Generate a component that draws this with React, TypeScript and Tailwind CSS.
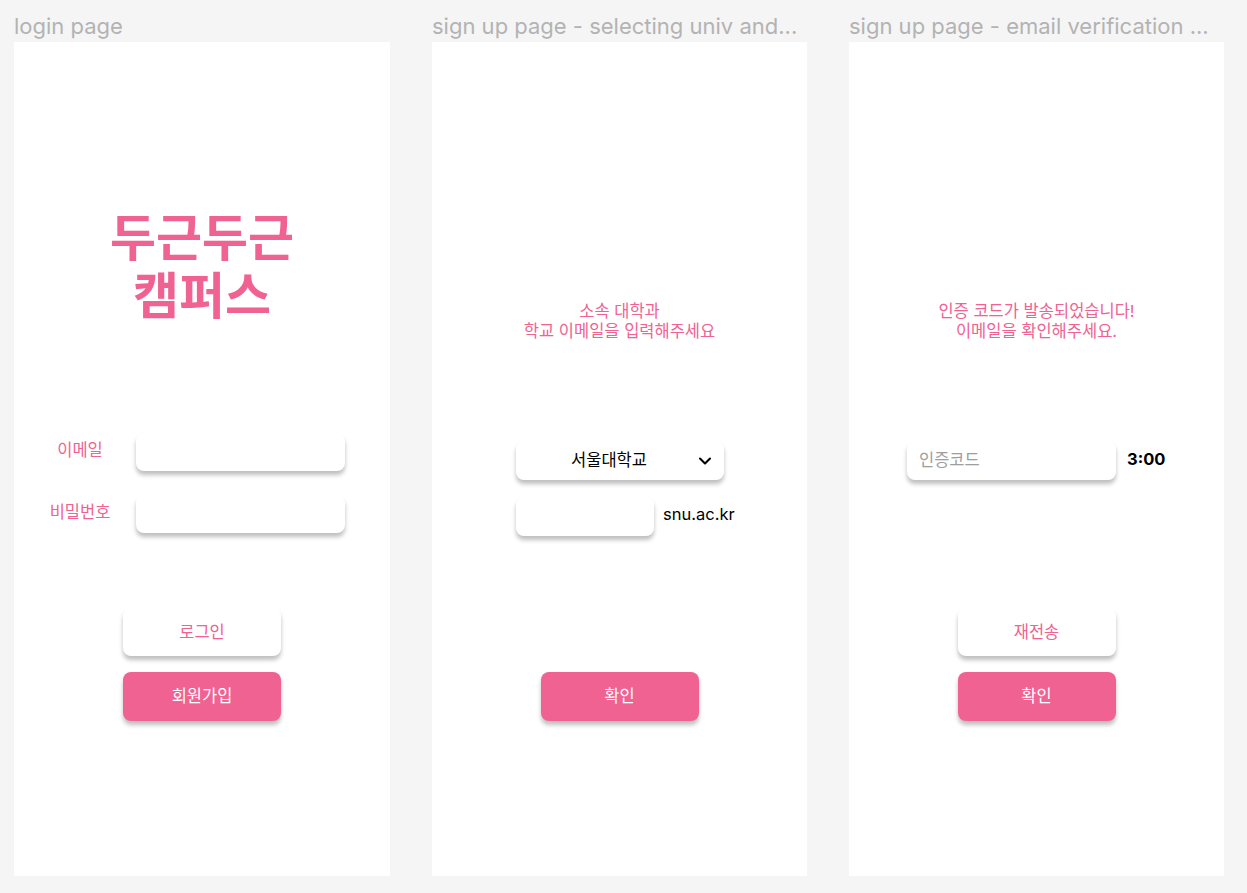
import { ChevronDown } from "lucide-react";

const font = "font-['Inter','Noto_Sans_CJK_KR',sans-serif]";

const Frame = ({ label, wide, children }: { label: string; wide?: boolean; children: React.ReactNode }) => (
  <div className="flex flex-col">
    <div className={`h-[42px] pt-[13px] text-[22px] leading-[26px] text-[#b3b3b3] whitespace-nowrap ${wide ? "w-[376px]" : "w-[375px]"}`}>
      {label}
    </div>
    <div className={`h-[834px] bg-white flex flex-col ${wide ? "w-[376px]" : "w-[375px]"}`}>{children}</div>
  </div>
);

const Field = ({ className = "", children }: { className?: string; children?: React.ReactNode }) => (
  <div className={`bg-white rounded-lg shadow-[0_4px_4px_rgba(0,0,0,0.25)] ${className}`}>{children}</div>
);

const Button = ({ primary, children }: { primary?: boolean; children: React.ReactNode }) => (
  <div
    className={`w-[158px] rounded-lg shadow-[0_4px_4px_rgba(0,0,0,0.25)] flex items-center justify-center text-[16.5px] ${
      primary ? "h-[49px] bg-[#f06292] text-white" : "h-[48px] bg-white text-[#f06292]"
    }`}
  >
    {children}
  </div>
);

export default function App() {
  return (
    <div className={`${font} w-[1247px] h-[893px] bg-[#f5f5f5] flex gap-[42px] pl-[14px] overflow-hidden`}>
      {/* login */}
      <Frame label="login page" wide>
        <div className="mt-[167px] text-center font-bold text-[50px] leading-[58px] text-[#f06292]">
          두근두근
          <br />
          캠퍼스
        </div>
        <div className="mt-[108px] flex flex-col gap-[24px]">
          <div className="flex items-center">
            <div className="ml-[26px] w-[80px] text-center text-[16.5px] text-[#f06292] pb-[4px]">이메일</div>
            <Field className="ml-[16px] w-[209px] h-[38px]" />
          </div>
          <div className="flex items-center">
            <div className="ml-[26px] w-[80px] text-center text-[16.5px] text-[#f06292] pb-[4px]">비밀번호</div>
            <Field className="ml-[16px] w-[209px] h-[38px]" />
          </div>
        </div>
        <div className="mt-[75px] flex flex-col items-center gap-[16px]">
          <Button>로그인</Button>
          <Button primary>회원가입</Button>
        </div>
      </Frame>

      {/* sign up - univ */}
      <Frame label="sign up page - selecting univ and...">
        <div className="mt-[259px] text-center text-[16.5px] leading-[20px] text-[#f06292]">
          소속 대학과
          <br />
          학교 이메일을 입력해주세요
        </div>
        <Field className="mt-[100px] self-center w-[208px] h-[39px] flex items-center pl-[8px] pr-[9px]">
          <span className="flex-1 text-center text-[16.5px] text-black">서울대학교</span>
          <ChevronDown className="w-[20px] h-[20px] text-black" strokeWidth={2.5} />
        </Field>
        <div className="mt-[17px] ml-[84px] flex items-center gap-[9px]">
          <Field className="w-[138px] h-[39px]" />
          <span className="text-[16.5px] text-black pb-[4px]">snu.ac.kr</span>
        </div>
        <div className="mt-[136px] flex justify-center">
          <Button primary>확인</Button>
        </div>
      </Frame>

      {/* sign up - verification */}
      <Frame label="sign up page - email verification ...">
        <div className="mt-[259px] text-center text-[16.5px] leading-[20px] text-[#f06292]">
          인증 코드가 발송되었습니다!
          <br />
          이메일을 확인해주세요.
        </div>
        <div className="mt-[100px] ml-[58px] flex items-center gap-[11px]">
          <Field className="w-[209px] h-[39px] flex items-center pl-[12px]">
            <span className="text-[16.5px] text-[#9e9e9e]">인증코드</span>
          </Field>
          <span className="text-[16.5px] font-bold text-black pb-[2px]">3:00</span>
        </div>
        <div className="mt-[128px] flex flex-col items-center gap-[16px]">
          <Button>재전송</Button>
          <Button primary>확인</Button>
        </div>
      </Frame>
    </div>
  );
}
